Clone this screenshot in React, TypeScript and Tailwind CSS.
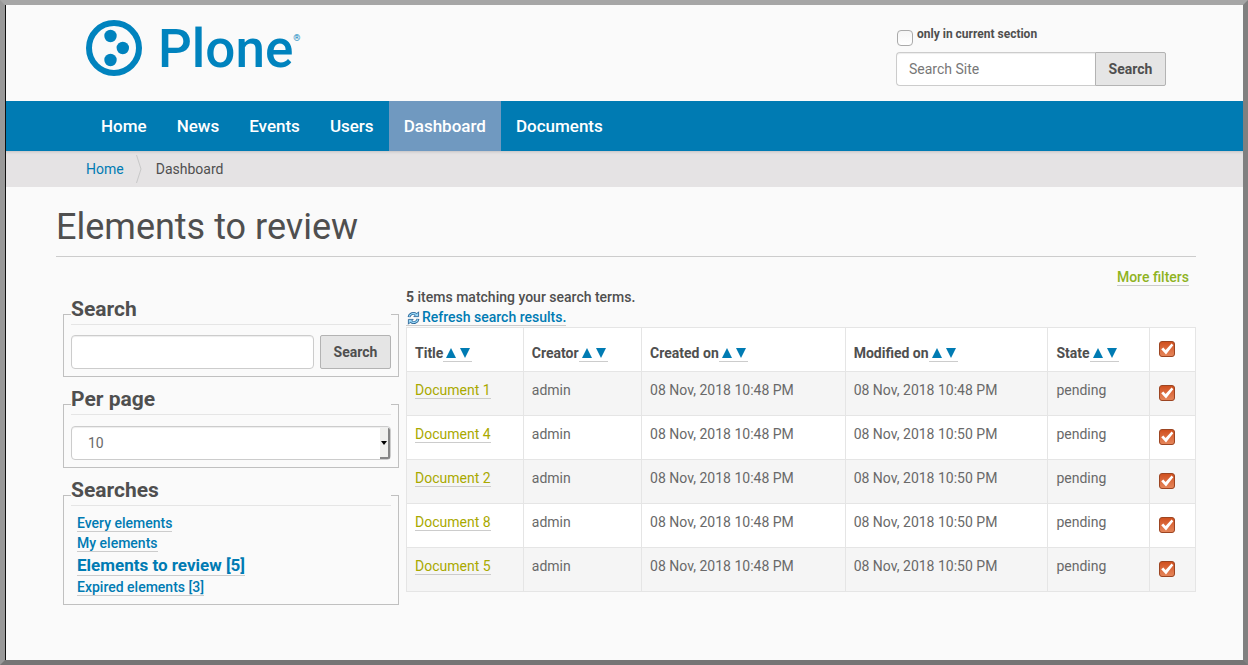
import { useState } from "react";

const navItems = ["Home", "News", "Events", "Users", "Dashboard", "Documents"];

const columns = [
  { label: "Title", width: "w-[14.8%]" },
  { label: "Creator", width: "w-[15%]" },
  { label: "Created on", width: "w-[25.8%]" },
  { label: "Modified on", width: "w-[25.7%]" },
  { label: "State", width: "w-[12.9%]" },
];

const documents = [
  { title: "Document 1", created: "08 Nov, 2018 10:48 PM", modified: "08 Nov, 2018 10:48 PM" },
  { title: "Document 4", created: "08 Nov, 2018 10:48 PM", modified: "08 Nov, 2018 10:50 PM" },
  { title: "Document 2", created: "08 Nov, 2018 10:48 PM", modified: "08 Nov, 2018 10:50 PM" },
  { title: "Document 8", created: "08 Nov, 2018 10:48 PM", modified: "08 Nov, 2018 10:50 PM" },
  { title: "Document 5", created: "08 Nov, 2018 10:48 PM", modified: "08 Nov, 2018 10:50 PM" },
];

const savedSearches = [
  { label: "Every elements" },
  { label: "My elements" },
  { label: "Elements to review [5]", current: true },
  { label: "Expired elements [3]" },
];

function Logo() {
  return (
    <a href="#" className="flex items-start gap-4 text-[#0083be]">
      <svg className="size-14" viewBox="0 0 56 56" aria-hidden="true">
        <circle cx="28" cy="28" r="25" fill="none" stroke="currentColor" strokeWidth="6" />
        <circle cx="24.5" cy="16" r="6.2" fill="currentColor" />
        <circle cx="36.8" cy="28" r="6.2" fill="currentColor" />
        <circle cx="24.5" cy="40" r="6.2" fill="currentColor" />
      </svg>
      <span className="flex items-start">
        <span className="text-[53px] leading-[58px] font-medium">Plone</span>
        <span className="pt-3 text-[9px] leading-3">®</span>
      </span>
    </a>
  );
}

function RefreshIcon() {
  return (
    <svg className="mr-px ml-px inline size-3.5 align-[-3px]" viewBox="0 0 14 14" aria-hidden="true">
      <g fill="none" stroke="#1d5b8f" strokeWidth="2.8">
        <path d="M2 6.2C2.4 3 6 1 9.2 3.4" />
        <path d="M11 7.8C10.6 11 7 13 3.8 10.6" />
      </g>
      <g fill="#9ad8f7" stroke="#1d5b8f" strokeWidth="0.8">
        <path d="M11.6 0.8V5.6H6.8Z" />
        <path d="M1.4 13.2V8.4H6.2Z" />
      </g>
      <g fill="none" stroke="#9ad8f7" strokeWidth="1.3">
        <path d="M2.1 5.6C2.8 3 6 1.2 9.6 3.8" />
        <path d="M10.9 8.4C10.2 11 7 12.8 3.4 10.2" />
      </g>
    </svg>
  );
}

function SortLinks({ label }: { label: string }) {
  return (
    <span className="inline-flex h-[19px] items-center border-b border-[#ccc] pt-px text-[#007bb3]">
      <a href="#" aria-label={`Sort by ${label}, ascending`} className="pr-0.5 pl-[3px]">
        <svg className="h-2.5 w-2.5" viewBox="0 0 10 10" aria-hidden="true">
          <path d="M5 0L10 10H0Z" fill="currentColor" />
        </svg>
      </a>
      <a href="#" aria-label={`Sort by ${label}, descending`} className="px-0.5">
        <svg className="h-2.5 w-2.5" viewBox="0 0 10 10" aria-hidden="true">
          <path d="M0 0H10L5 10Z" fill="currentColor" />
        </svg>
      </a>
    </span>
  );
}

function OrangeCheckbox({
  label,
  checked,
  onChange,
}: {
  label: string;
  checked: boolean;
  onChange: () => void;
}) {
  return (
    <span className="grid size-4 place-items-center">
      <input
        type="checkbox"
        aria-label={label}
        checked={checked}
        onChange={onChange}
        className="peer col-start-1 row-start-1 size-4 appearance-none rounded-[3px] border border-[#b5b5b5] bg-white checked:border-[#9c4522] checked:bg-linear-to-b checked:from-[#d0501e] checked:to-[#e58559]"
      />
      <svg
        className="pointer-events-none invisible col-start-1 row-start-1 size-4 peer-checked:visible"
        viewBox="0 0 16 16"
        aria-hidden="true"
      >
        <path d="M2.2 8.3L4.3 6.6L6.6 9.1L12.6 2.6L14.3 4.2L7 13.4Z" fill="#fff" />
      </svg>
    </span>
  );
}

function Panel({ title, children }: { title: string; children: React.ReactNode }) {
  return (
    <fieldset className="min-w-0 border border-[#c0c0c0] px-[7px] pb-[7px]">
      <legend className="w-full pb-[9px] text-[21px] leading-[30px] font-bold text-[#4f4f4f]">
        <span className="block border-b border-[#e5e5e5]">{title}</span>
      </legend>
      {children}
    </fieldset>
  );
}

const fieldClass =
  "h-[34px] border border-[#ccc] bg-white text-sm text-[#696969] shadow-[inset_0_1px_1px_rgba(0,0,0,0.075)] outline-none placeholder:text-[#777]";
const buttonClass =
  "h-[34px] w-[71px] shrink-0 border border-[#b3b3b3] bg-[#e5e5e5] text-center text-sm font-bold text-[#4f4f4f]";

export default function App() {
  const [selected, setSelected] = useState(documents.map(() => true));
  const allSelected = selected.every(Boolean);

  return (
    <div className="min-h-screen border-5 border-t-[#a6a6a6] border-r-[#808080] border-b-[#757575] border-l-[#999] bg-[#fafafa] font-['Roboto','Liberation_Sans',sans-serif] text-sm leading-5 text-[#696969]">
      <div className="min-h-[655px] border-l border-[#111]">
        <header className="flex h-24 items-start justify-between pt-[15px] pr-[77px] pl-20">
          <Logo />
          <form className="w-[270px] pt-1" onSubmit={(e) => e.preventDefault()}>
            <div className="flex h-7 items-start text-xs font-bold text-[#4f4f4f]">
              <input
                id="section-only"
                type="checkbox"
                className="mt-1.5 mr-1 ml-px size-4 appearance-none rounded-sm border border-[#aaa] bg-linear-to-b from-[#f5f5f5] to-white checked:bg-[#007bb3]"
              />
              <label htmlFor="section-only" className="pt-0.5">
                only in current section
              </label>
            </div>
            <div className="flex">
              <input
                type="text"
                aria-label="Search Site"
                placeholder="Search Site"
                className={`${fieldClass} min-w-0 flex-1 rounded-l border-r-0 px-3`}
              />
              <button className={`${buttonClass} rounded-r-xs`}>Search</button>
            </div>
          </form>
        </header>

        <nav className="flex bg-[#007bb3] pl-20 text-[17px] font-medium text-white">
          {navItems.map((item) => (
            <a
              key={item}
              href="#"
              className={`px-[15px] py-[15px] leading-5 ${item === "Dashboard" ? "bg-[#7099c0]" : ""}`}
            >
              {item}
            </a>
          ))}
        </nav>

        <nav
          aria-label="Breadcrumb"
          className="flex h-9 items-center bg-[#e5e3e4] pl-20 shadow-[inset_0_3px_3px_-2px_rgba(0,0,0,0.15)]"
        >
          <a href="#" className="text-[#007bb3]">
            Home
          </a>
          <svg className="mr-3.5 ml-3 h-7 w-1.5" viewBox="0 0 6 28" aria-hidden="true">
            <path d="M0.5 0L5 14L0.5 28" fill="none" stroke="#c8c8c8" />
          </svg>
          <span className="text-[#4f4f4f]">Dashboard</span>
        </nav>

        <main className="pr-[47px] pl-[50px]">
          <h1 className="border-b border-[#ccc] pt-5 pb-[9px] text-[36px] leading-10 text-[#4f4f4f]">
            Elements to review
          </h1>

          <div className="flex justify-end pt-2.5 pb-px pr-[7px]">
            <a href="#" className="h-[19px] border-b border-[#ccc] font-medium text-[#8fb31f]">
              More filters
            </a>
          </div>

          <div className="flex items-start">
            <aside className="flex w-[350px] shrink-0 flex-col gap-[7px] px-[7px] pt-[7px]">
              <Panel title="Search">
                <div className="flex gap-1.5 pt-px">
                  <input
                    type="text"
                    aria-label="Search"
                    className={`${fieldClass} min-w-0 flex-1 rounded px-3`}
                  />
                  <button className={`${buttonClass} rounded-xs`}>Search</button>
                </div>
              </Panel>

              <Panel title="Per page">
                <div className="relative pt-0.5">
                  <select
                    aria-label="Per page"
                    defaultValue="10"
                    className={`${fieldClass} block w-full appearance-none rounded px-4`}
                  >
                    <option>10</option>
                    <option>20</option>
                    <option>50</option>
                  </select>
                  <span className="pointer-events-none absolute top-1 right-px bottom-px flex w-2.5 items-center justify-center rounded-r-xs border-r-2 border-b-2 border-[#858585] bg-[#f0f0ee]">
                    <svg className="h-1 w-1.5" viewBox="0 0 6 4" aria-hidden="true">
                      <path d="M0 0H6L3 4Z" fill="#000" />
                    </svg>
                  </span>
                </div>
              </Panel>

              <Panel title="Searches">
                <ul className="-mt-0.5 pl-1.5 font-medium">
                  {savedSearches.map((search) => (
                    <li key={search.label} className={search.current ? "text-[17px] leading-6 font-bold" : ""}>
                      <a href="#" className="border-b border-[#ccc] text-[#007bb3]">
                        {search.label}
                      </a>
                    </li>
                  ))}
                </ul>
              </Panel>
            </aside>

            <section className="min-w-0 flex-1">
              <p className="font-medium text-[#4f4f4f]">
                <strong className="font-bold">5</strong> items matching your search terms.
              </p>
              <p className="font-medium">
                <a href="#" className="border-b border-[#ccc] text-[#007bb3]">
                  <RefreshIcon />
                  Refresh search results.
                </a>
              </p>

              <table className="w-full table-fixed border-collapse bg-white text-left">
                <thead>
                  <tr className="h-11">
                    {columns.map((column) => (
                      <th
                        key={column.label}
                        className={`${column.width} border border-[#e5e5e5] px-2 pb-2 align-bottom font-bold whitespace-nowrap text-[#4f4f4f]`}
                      >
                        <span className="flex">
                          {column.label}
                          <SortLinks label={column.label} />
                        </span>
                      </th>
                    ))}
                    <th className="border border-[#e5e5e5] px-[9px] pt-[13px] align-top">
                      <OrangeCheckbox
                        label="Select all"
                        checked={allSelected}
                        onChange={() => setSelected(documents.map(() => !allSelected))}
                      />
                    </th>
                  </tr>
                </thead>
                <tbody>
                  {documents.map((doc, index) => (
                    <tr
                      key={doc.title}
                      className="h-11 align-top odd:bg-[#f5f5f5] [&>td]:border [&>td]:border-[#e5e5e5] [&>td]:px-2 [&>td]:pt-2"
                    >
                      <td>
                        <a href="#" className="border-b border-[#ccc] text-[#a9a900]">
                          {doc.title}
                        </a>
                      </td>
                      <td>admin</td>
                      <td>{doc.created}</td>
                      <td>{doc.modified}</td>
                      <td>pending</td>
                      <td>
                        <div className="pt-[5px] pl-px">
                          <OrangeCheckbox
                            label={`Select ${doc.title}`}
                            checked={selected[index]}
                            onChange={() =>
                              setSelected(selected.map((value, i) => (i === index ? !value : value)))
                            }
                          />
                        </div>
                      </td>
                    </tr>
                  ))}
                </tbody>
              </table>
            </section>
          </div>
        </main>
      </div>
    </div>
  );
}
